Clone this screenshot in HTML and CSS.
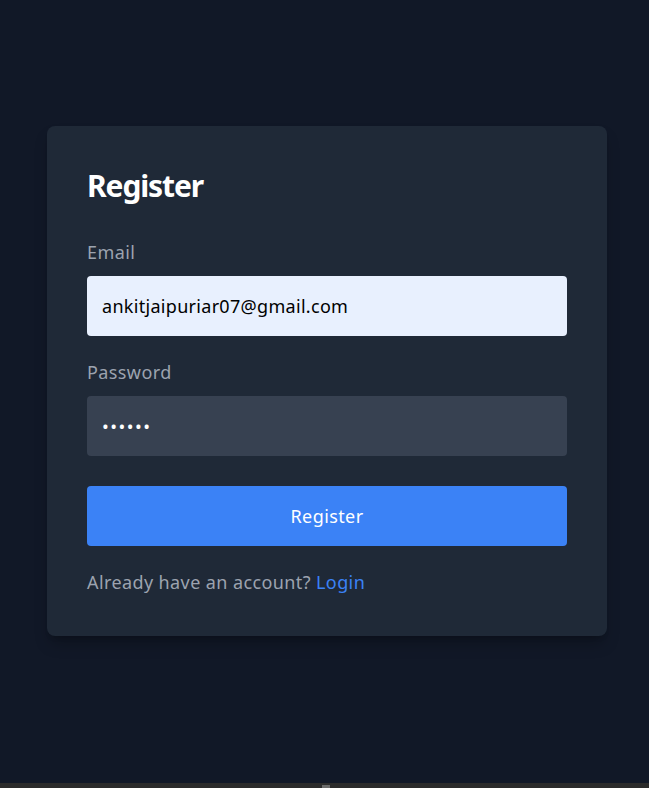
FILE: index.html
```html
<!DOCTYPE html>
<html lang="en">
<head>
<meta charset="utf-8">
<title>Register</title>
<link rel="stylesheet" href="styles.css">
</head>
<body>
<main class="page">
  <form class="card">
    <h1 class="title">Register</h1>
    <div class="field">
      <label class="label" for="email">Email</label>
      <input class="input input-filled" id="email" type="email" value="ankitjaipuriar07@gmail.com">
    </div>
    <div class="field field-last">
      <label class="label" for="password">Password</label>
      <input class="input input-dark" id="password" type="password" value="123456">
    </div>
    <button class="button" type="button">Register</button>
    <p class="footer">Already have an account? <a class="link" href="#">Login</a></p>
  </form>
</main>
<div class="hscroll"><div class="hscroll-thumb"></div></div>
</body>
</html>
```
FILE: styles.css
```css
* { box-sizing: border-box; }
html, body { margin: 0; padding: 0; }
body {
  background: #111827;
  min-height: 100vh;
  font-family: "Noto Sans", "Open Sans", sans-serif;
  color: #ffffff;
}
.page {
  display: flex;
  padding: 126px 0 0 47px;
}
.card {
  width: 560px;
  background: #1f2937;
  border-radius: 8px;
  padding: 40px 40px 40px;
  box-shadow: 0 10px 15px -3px rgba(0,0,0,0.25), 0 4px 6px -4px rgba(0,0,0,0.2);
  letter-spacing: 0.4px;
}
.title {
  margin: 2px 0 33px;
  font-size: 30px;
  line-height: 36px;
  font-weight: 700;
  letter-spacing: -1.1px;
  color: #ffffff;
}
.field { margin-bottom: 21px; }
.field-last { margin-bottom: 30px; }
.label {
  display: block;
  font-size: 18px;
  line-height: 28px;
  padding-top: 1px;
  color: #9ca3af;
  margin-bottom: 10px;
}
.input {
  display: block;
  width: 100%;
  height: 60px;
  border: none;
  border-radius: 4px;
  padding: 0 15px;
  font-family: inherit;
  font-size: 18px;
  letter-spacing: 0.3px;
  outline: none;
}
.input-filled { background: #e8f0fe; color: #000000; }
.input-dark { background: #374151; color: #ffffff; letter-spacing: 1.5px; }
.button {
  display: block;
  width: 100%;
  height: 60px;
  border: none;
  border-radius: 4px;
  background: #3b82f6;
  color: #ffffff;
  font-family: inherit;
  font-size: 18px;
  letter-spacing: 0.4px;
}
.footer {
  margin: 22px 0 0;
  font-size: 18px;
  line-height: 28px;
  color: #9ca3af;
}
.link { color: #3b82f6; text-decoration: none; }
.hscroll {
  position: fixed;
  left: 0;
  right: 0;
  bottom: 0;
  height: 5px;
  background: #2b2b2b;
}
.hscroll-thumb {
  position: absolute;
  left: 322px;
  top: 2px;
  width: 8px;
  height: 3px;
  background: #6b6b6b;
}
```
